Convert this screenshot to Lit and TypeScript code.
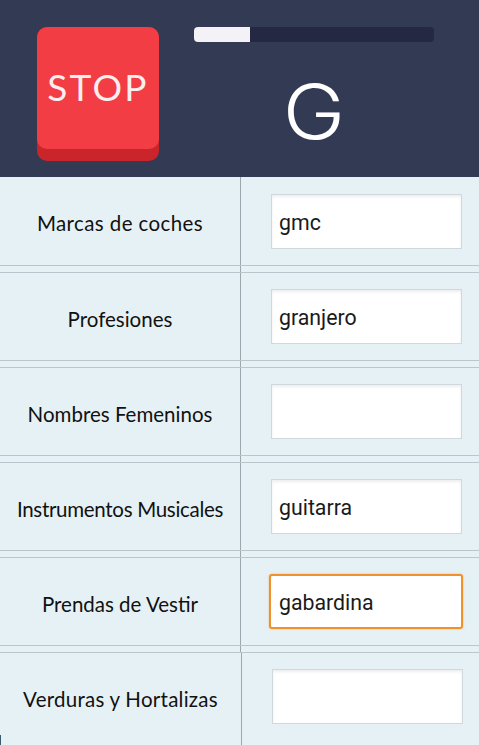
import { LitElement, html, css } from "lit";
import { customElement } from "lit/decorators.js";

const rows = [
  ["Marcas de coches", "gmc", "wide"],
  ["Profesiones", "granjero", ""],
  ["Nombres Femeninos", "", ""],
  ["Instrumentos Musicales", "guitarra", "tight"],
  ["Prendas de Vestir", "gabardina", ""],
  ["Verduras y Hortalizas", "", "loose"],
];

@customElement("app-root")
export class AppRoot extends LitElement {
  static styles = css`
    :host { display: block; position: relative; width: 479px; height: 745px; overflow: hidden; background: #e6f1f6; font-family: "Lato", "Liberation Sans", sans-serif; color: #111; }
    .head { height: 177px; background: #323a54; display: flex; box-sizing: border-box; padding: 27px 0 0 37px; }
    .stop { width: 122px; height: 134px; border-radius: 10px; background: #c9252b; }
    .stop-face { height: 122px; box-sizing: border-box; padding-bottom: 3px; border-radius: 10px; background: #f23d44; color: #fbeeee; font-size: 37px; letter-spacing: 2.2px; display: flex; align-items: center; justify-content: center; }
    .side { margin-left: 35px; width: 240px; display: flex; flex-direction: column; }
    .track { height: 15px; border-radius: 4px; background: #252843; overflow: hidden; }
    .fill { width: 56px; height: 100%; background: #f5f2f7; }
    .letter { text-align: center; color: #fff; font-family: "Inter", sans-serif; font-weight: 350; font-size: 75px; line-height: 75px; margin-top: 32px; transform: scaleX(1.12); }
    .row { display: flex; height: 88px; border-bottom: 1px solid #b9c6cd; }
    .row.next { height: 87px; border-top: 1px solid #b9c6cd; }
    .label { width: 241px; flex: none; box-sizing: border-box; padding-top: 4px; display: flex; align-items: center; justify-content: center; font-size: 20.5px; border-right: 1px solid #9ca7b0; }
    .label.wide { letter-spacing: 0.4px; }
    .label.loose { letter-spacing: 0.25px; }
    .label.tight { letter-spacing: -0.3px; }
    .cell { flex: 1; display: flex; align-items: center; padding-left: 30px; }
    .input { width: 191px; height: 55px; box-sizing: border-box; background: #fff; border: 1px solid #cfd8dc; box-shadow: inset 0 2px 3px rgba(0,0,0,.07); padding: 2px 0 0 7px; display: flex; align-items: center; font-family: "Roboto", sans-serif; font-size: 21.3px; color: #1a1a1a; }
    .input.focus { width: 194px; margin-left: -2px; border: 2px solid #f0922b; border-radius: 3px; box-shadow: 0 0 2px #f7b26a; padding-left: 8px; }
    .gap { height: 6px; width: 241px; box-sizing: border-box; border-right: 1px solid #9ca7b0; }
    .row.next.last { height: 92px; border-bottom: none; }
    .row.last .label { width: 242px; padding-bottom: 5px; }
    .row.last .cell { padding-bottom: 5px; }
    .speck { position: absolute; left: 0; bottom: 0; width: 1px; height: 10px; background: #3c5a6e; }
  `;
  render() {
    return html`
      <div class="head">
        <div class="stop"><div class="stop-face">STOP</div></div>
        <div class="side">
          <div class="track"><div class="fill"></div></div>
          <div class="letter">G</div>
        </div>
      </div>
      ${rows.map(
        ([label, value, fit], i) => html`
          ${i > 0 ? html`<div class="gap"></div>` : ""}
          <div class="row ${i > 0 ? "next" : ""} ${i === 5 ? "last" : ""}">
            <div class="label ${fit}">${label}</div>
            <div class="cell"><div class="input ${i === 4 ? "focus" : ""}">${value}</div></div>
          </div>
        `
      )}
      <div class="speck"></div>
    `;
  }
}
